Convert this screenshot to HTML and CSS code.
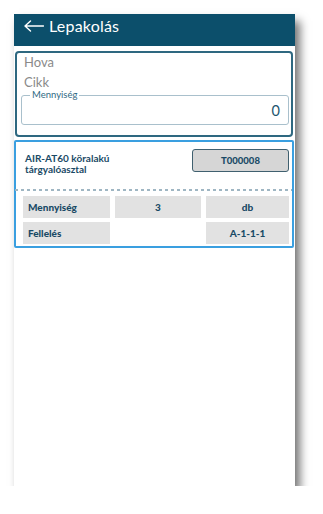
FILE: index.html
```html
<!DOCTYPE html>
<html>
<head>
<meta charset="utf-8">
<link rel="stylesheet" href="styles.css">
</head>
<body>
<div class="screen">
  <header class="appbar">
    <svg class="back" width="20" height="12" viewBox="0 0 20 12" aria-hidden="true">
      <path d="M1 6 H19.5 M6.5 1 L1 6 L6.5 11" fill="none" stroke="#fff" stroke-width="1.4" stroke-linecap="round" stroke-linejoin="round"/>
    </svg>
    <span class="title">Lepakolás</span>
  </header>
  <section class="form-card">
    <div class="field">Hova</div>
    <div class="field">Cikk</div>
    <fieldset class="qty">
      <legend>Mennyiség</legend>
      <div class="qty-value">0</div>
    </fieldset>
  </section>
  <section class="item-card">
    <div class="item-head">
      <div class="item-name">AIR-AT60 köralakú tárgyalóasztal</div>
      <div class="item-code">T000008</div>
    </div>
    <div class="divider"></div>
    <div class="grid">
      <div class="cell label">Mennyiség</div>
      <div class="cell center">3</div>
      <div class="cell center">db</div>
      <div class="cell label">Fellelés</div>
      <div class="cell empty"></div>
      <div class="cell center">A-1-1-1</div>
    </div>
  </section>
</div>
</body>
</html>
```
FILE: styles.css
```css
* { box-sizing: border-box; }
html, body { margin: 0; padding: 0; background: #fff; }
body { font-family: "Lato", "Open Sans", sans-serif; }

.screen {
  margin: 14px 0 0 14px;
  width: 281px;
  height: 472px;
  background: #fff;
  box-shadow: 5px 7px 9px rgba(0,0,0,0.55);
}

.appbar {
  height: 32px;
  background: #0c4f6b;
  color: #fff;
  display: flex;
  align-items: flex-start;
  padding: 1px 0 0 10px;
  font-size: 16px;
  line-height: 22px;
}
.back { margin: 5px 5px 0 0; flex: none; }
.title { letter-spacing: 0.2px; }

.form-card {
  margin: 5px 2px 0 1px;
  height: 86px;
  border: 2px solid #2e6880;
  border-radius: 4px;
  padding: 2px 2px 0 7px;
}
.field {
  color: #8a8a8a;
  font-size: 13px;
  line-height: 15px;
  height: 15px;
}
.field + .field { margin-top: 5px; }
.qty {
  margin: 0 0 0 -3px;
  height: 35px;
  border: 1px solid #a9c0cc;
  border-radius: 3px;
  padding: 0 8px 0 8px;
}
.qty legend {
  font-size: 9.5px;
  color: #2f6a84;
  padding: 0 2px;
  margin-left: 0;
  line-height: 10px;
}
.qty-value {
  text-align: right;
  color: #1d566f;
  font-size: 14.5px;
  line-height: 18px;
  margin-top: 2px;
}

.item-card {
  margin: 3px 1px 0 0;
  height: 108px;
  border: 2px solid #3a9fe0;
  border-radius: 2px;
  padding: 7px 3px 0 0;
}
.item-head {
  display: flex;
  justify-content: space-between;
  align-items: flex-start;
  padding-left: 9px;
  height: 34px;
}
.item-name {
  font-weight: 700;
  color: #1a4a66;
  font-size: 10px;
  line-height: 11px;
  width: 110px;
  padding-top: 4px;
}
.item-code {
  width: 97px;
  height: 23px;
  background: #d6d6d6;
  border: 1px solid #40606f;
  border-radius: 3px;
  font-weight: 900;
  color: #1a4a66;
  font-size: 9.5px;
  display: flex;
  align-items: center;
  justify-content: center;
}
.divider {
  margin: 6px -3px 0 -1px;
  height: 2px;
  background: repeating-linear-gradient(90deg, #9fb6c3 0 3px, transparent 3px 6px);
}
.grid {
  display: grid;
  grid-template-columns: 87px 86px 83px;
  gap: 4px 5px;
  padding: 5px 0 0 7px;
}
.cell {
  height: 22px;
  background: #e2e2e2;
  color: #1a4a66;
  font-weight: 900;
  font-size: 10px;
  display: flex;
  align-items: center;
}
.cell.label { padding-left: 5px; }
.cell.center { justify-content: center; }
.cell.empty { background: transparent; }
```
